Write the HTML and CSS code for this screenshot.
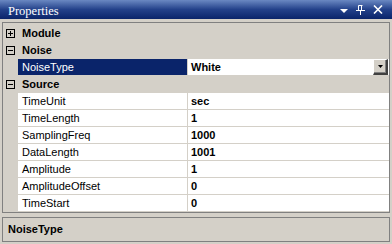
FILE: index.html
```html
<!DOCTYPE html>
<html lang="en">
<head>
    <meta charset="UTF-8">
    <title>Properties</title>
    <link rel="stylesheet" href="styles.css">
</head>
<body>
    <div class="panel">
        <!-- Title bar -->
        <div class="titlebar">
            <span class="title">Properties</span>
            <div class="tools">
                <svg width="8" height="5" viewBox="0 0 8 5"><path d="M0 0H8L4 4Z" fill="#fff"/></svg>
                <svg width="9" height="10" viewBox="0 0 9 10"><path d="M2.5 0.5H6.5M2.5 0.5V5.5M5.5 0.5V5.5M0 5.5H9M4.5 6V10" stroke="#fff" stroke-width="1" fill="none"/></svg>
                <svg width="10" height="9" viewBox="0 0 10 9"><path d="M1 0.5L9 8.5M9 0.5L1 8.5" stroke="#fff" stroke-width="1.6" fill="none"/></svg>
            </div>
        </div>

        <!-- Property grid -->
        <div class="grid">
            <div class="cat">
                <span class="gutter"><svg class="toggle" width="9" height="9" viewBox="0 0 9 9"><rect x="0.5" y="0.5" width="8" height="8" fill="none" stroke="#000"/><path d="M2 4.5H7M4.5 2V7" stroke="#000"/></svg></span>
                <span class="cat-label">Module</span>
            </div>
            <div class="cat">
                <span class="gutter"><svg class="toggle" width="9" height="9" viewBox="0 0 9 9"><rect x="0.5" y="0.5" width="8" height="8" fill="none" stroke="#000"/><path d="M2 4.5H7" stroke="#000"/></svg></span>
                <span class="cat-label">Noise</span>
            </div>
            <div class="prop selected">
                <span class="gutter"></span>
                <span class="name">NoiseType</span>
                <span class="value">White
                    <span class="drop"><svg width="5" height="3" viewBox="0 0 5 3"><path d="M0 0H5L2.5 3Z" fill="#000"/></svg></span>
                </span>
            </div>
            <div class="cat">
                <span class="gutter"><svg class="toggle" width="9" height="9" viewBox="0 0 9 9"><rect x="0.5" y="0.5" width="8" height="8" fill="none" stroke="#000"/><path d="M2 4.5H7" stroke="#000"/></svg></span>
                <span class="cat-label">Source</span>
            </div>
            <div class="prop"><span class="gutter"></span><span class="name">TimeUnit</span><span class="value">sec</span></div>
            <div class="prop"><span class="gutter"></span><span class="name">TimeLength</span><span class="value">1</span></div>
            <div class="prop"><span class="gutter"></span><span class="name">SamplingFreq</span><span class="value">1000</span></div>
            <div class="prop"><span class="gutter"></span><span class="name">DataLength</span><span class="value">1001</span></div>
            <div class="prop"><span class="gutter"></span><span class="name">Amplitude</span><span class="value">1</span></div>
            <div class="prop"><span class="gutter"></span><span class="name">AmplitudeOffset</span><span class="value">0</span></div>
            <div class="prop"><span class="gutter"></span><span class="name">TimeStart</span><span class="value">0</span></div>
        </div>

        <!-- Description area -->
        <div class="desc">NoiseType</div>
    </div>
</body>
</html>
```

FILE: styles.css
```css
/* General */
body {
    margin: 0;
    background-color: #d4d0c8;
    font-family: "Liberation Sans", Arial, sans-serif;
    font-size: 11px;
    color: #000;
}
.panel {
    width: 392px;
    height: 244px;
    overflow: hidden;
}

/* Title bar */
.titlebar {
    height: 19px;
    display: flex;
    align-items: flex-start;
    background: linear-gradient(#6a88c2, #23418a 50%, #0a246a);
    color: #fff;
    overflow: hidden;
}
.title {
    font-family: "Liberation Serif", "Times New Roman", serif;
    font-size: 12.5px;
    line-height: 16px;
    padding: 3px 0 0 8px;
}
.tools {
    margin-left: auto;
    display: flex;
    align-items: center;
    height: 19px;
    padding-right: 9px;
}
.tools svg {
    display: block;
    margin-left: 8px;
}
.tools svg:first-child {
    margin-top: 3px;
}

/* Property grid */
.grid {
    margin: 3px 2px 0;
    border: 1px solid #808080;
    padding-top: 2px;
    height: 187px;
}
.cat, .prop {
    display: flex;
    height: 17px;
    line-height: 16px;
}
.gutter {
    width: 15px;
    flex-shrink: 0;
    position: relative;
}
.toggle {
    position: absolute;
    left: 3px;
    top: 4px;
}
.cat-label {
    font-weight: bold;
    padding-left: 4px;
}
.name {
    width: 165px;
    padding-left: 4px;
    background-color: #fff;
    border-right: 1px solid #d4d0c8;
    border-bottom: 1px solid #d4d0c8;
    white-space: nowrap;
}
.value {
    flex: 1;
    padding-left: 3px;
    background-color: #fff;
    border-bottom: 1px solid #d4d0c8;
    font-weight: bold;
    display: flex;
}
.selected .name {
    background-color: #0a246a;
    color: #fff;
}

/* Dropdown button */
.drop {
    margin-left: auto;
    width: 12px;
    height: 13px;
    margin-right: 1px;
    background-color: #d4d0c8;
    border-top: 1px solid #fff;
    border-left: 1px solid #fff;
    border-right: 2px solid #404040;
    border-bottom: 2px solid #404040;
    box-shadow: inset -1px -1px 0 #808080;
    display: flex;
    align-items: center;
    justify-content: center;
}
.drop svg {
    display: block;
}

/* Description */
.desc {
    margin: 4px 2px 0;
    height: 25px;
    border: 1px solid #808080;
    font-weight: bold;
    line-height: 16px;
    padding: 3px 0 0 5px;
    box-sizing: border-box;
}
```
